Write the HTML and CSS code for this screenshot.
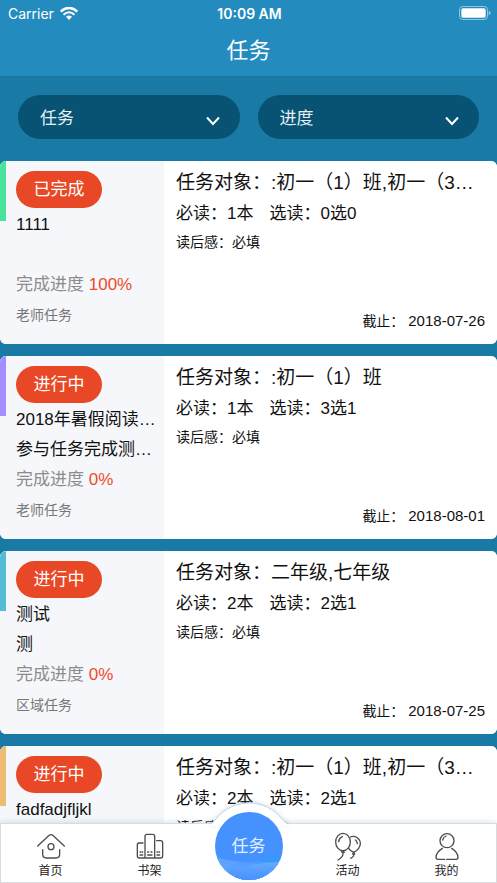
FILE: index.html
```html
<!DOCTYPE html>
<html lang="zh-CN">
<head>
<meta charset="utf-8">
<meta name="viewport" content="width=device-width, initial-scale=1">
<title>任务</title>
<link rel="stylesheet" href="styles.css">
</head>
<body>
<header class="header">
  <div class="status">
    <div class="status-carrier">
      <span>Carrier</span>
      <svg class="wifi" viewBox="0 0 51 37" aria-hidden="true">
        <path d="M2 13Q25.500-8 49 13" fill="none" stroke="#fff" stroke-width="7"/>
        <path d="M10 22Q25.500 8 41 22" fill="none" stroke="#fff" stroke-width="6"/>
        <path d="M17 28Q25.500 20 34 28L25.500 37Z" fill="#fff"/>
      </svg>
    </div>
    <span class="status-time">10:09 AM</span>
    <svg class="battery" viewBox="0 0 96 42" aria-hidden="true">
      <rect x="1.500" y="1.500" width="84" height="39" rx="10" fill="none" stroke="#fff" stroke-opacity=".5" stroke-width="3"/>
      <rect x="7" y="7" width="73" height="28" rx="5" fill="#fff"/>
      <path d="M89 14q6 2 6 7t-6 7z" fill="#fff" fill-opacity=".5"/>
    </svg>
  </div>
  <h1 class="title">任务</h1>
</header>

<main class="main">
  <form class="filters">
    <label class="filter">
      <select class="filter-select" aria-label="任务"><option>任务</option></select>
      <svg class="chevron" viewBox="0 0 14 10" aria-hidden="true"><path d="M1 1.500l6 6.500 6-6.500"/></svg>
    </label>
    <label class="filter">
      <select class="filter-select" aria-label="进度"><option>进度</option></select>
      <svg class="chevron" viewBox="0 0 14 10" aria-hidden="true"><path d="M1 1.500l6 6.500 6-6.500"/></svg>
    </label>
  </form>

  <section class="cards">
    <article class="card card-green">
      <div class="summary">
        <span class="badge">已完成</span>
        <p class="name">1111</p>
        <p class="name"></p>
        <p class="progress">完成进度 <span class="percent">100%</span></p>
        <p class="source">老师任务</p>
      </div>
      <div class="detail">
        <h2 class="target">任务对象：:初一（1）班,初一（3…</h2>
        <p class="books"><span>必读：1本</span><span>选读：0选0</span></p>
        <p class="review">读后感：必填</p>
        <p class="deadline">截止： <time class="date">2018-07-26</time></p>
      </div>
    </article>

    <article class="card card-purple">
      <div class="summary">
        <span class="badge">进行中</span>
        <p class="name">2018年暑假阅读…</p>
        <p class="name">参与任务完成测…</p>
        <p class="progress">完成进度 <span class="percent">0%</span></p>
        <p class="source">老师任务</p>
      </div>
      <div class="detail">
        <h2 class="target">任务对象：:初一（1）班</h2>
        <p class="books"><span>必读：1本</span><span>选读：3选1</span></p>
        <p class="review">读后感：必填</p>
        <p class="deadline">截止： <time class="date">2018-08-01</time></p>
      </div>
    </article>

    <article class="card card-cyan">
      <div class="summary">
        <span class="badge">进行中</span>
        <p class="name">测试</p>
        <p class="name">测</p>
        <p class="progress">完成进度 <span class="percent">0%</span></p>
        <p class="source">区域任务</p>
      </div>
      <div class="detail">
        <h2 class="target">任务对象：二年级,七年级</h2>
        <p class="books"><span>必读：2本</span><span>选读：2选1</span></p>
        <p class="review">读后感：必填</p>
        <p class="deadline">截止： <time class="date">2018-07-25</time></p>
      </div>
    </article>

    <article class="card card-amber">
      <div class="summary">
        <span class="badge">进行中</span>
        <p class="name">fadfadjfljkl</p>
      </div>
      <div class="detail">
        <h2 class="target">任务对象：:初一（1）班,初一（3…</h2>
        <p class="books"><span>必读：2本</span><span>选读：2选1</span></p>
        <p class="review">读后感：必填</p>
      </div>
    </article>
  </section>
</main>

<nav class="tabs">
  <a class="tab" href="#home">
    <svg class="tab-icon" viewBox="104 292 90 90" aria-hidden="true">
      <path d="M109 334L142 303Q149 297 156 303L189 334M124 345V359Q124 370 135 370H164Q175 370 175 359V345"/>
      <circle cx="149" cy="336" r="9"/>
    </svg>
    <span>首页</span>
  </a>
  <a class="tab" href="#shelf">
    <svg class="tab-icon" viewBox="403 292 90 90" aria-hidden="true">
      <path d="M433 370V305Q433 299 439 299H456Q462 299 462 305V370M427 325H415Q410 325 410 331V364Q410 370 416 370H480Q486 370 486 364V325Q486 318 480 318H468"/>
      <path d="M418 352H420M424 352H426M418 361H426M441 352H444M451 352H454M441 361H454M469 352H471M475 352H477M469 361H477"/>
    </svg>
    <span>书架</span>
  </a>
  <a class="tab tab-current" href="#task" aria-current="page">
    <svg class="bump" viewBox="0 0 84 24" aria-hidden="true">
      <path class="bump-fill" d="M2 24Q6 21 9 17A42 42 0 0 1 75 17Q78 21 82 24Z"/>
      <path class="bump-line" d="M2 21.500Q6 21 9 17A42 42 0 0 1 75 17Q78 21 82 21.500"/>
    </svg>
    <span class="disc">
      <svg class="waves" viewBox="0 0 68 68" aria-hidden="true">
        <defs>
          <linearGradient id="right-wave" x1="0" x2="1"><stop offset=".3" stop-color="#4592ff"/><stop offset="1" stop-color="#2b9cff"/></linearGradient>
          <linearGradient id="left-wave" x1="0" x2="1"><stop offset="0" stop-color="#63a5ff"/><stop offset="1" stop-color="#3f96ff"/></linearGradient>
          <linearGradient id="low-wave" x1="0" x2="0" y1="0" y2="1"><stop offset="0" stop-color="#66aaff"/><stop offset="1" stop-color="#4592ff"/></linearGradient>
        </defs>
        <path d="M20 51Q44 48 68 43V68H20Z" fill="url(#right-wave)"/>
        <path d="M0 45Q22 51 38 50T68 54V68H0Z" fill="url(#left-wave)"/>
        <path d="M0 57Q16 58 32 54T68 50V68H0Z" fill="url(#low-wave)"/>
      </svg>
      <span class="disc-label">任务</span>
    </span>
  </a>
  <a class="tab" href="#activity">
    <svg class="tab-icon" viewBox="16 292 90 90" aria-hidden="true">
      <ellipse cx="46" cy="322" rx="22" ry="26"/>
      <path d="M68 307C83 301 98 312 98 327Q97 343 78 353Q68 349 63 341M42 349L46 348 50 353H43ZM46 353Q48 366 31 376M78 353L81 358H75L78 353M78 358Q80 366 69 371M33 321Q34 310 44 306M89 327Q88 319 83 316"/>
    </svg>
    <span>活动</span>
  </a>
  <a class="tab" href="#me">
    <svg class="tab-icon" viewBox="314 292 90 90" aria-hidden="true">
      <circle cx="359" cy="318" r="21"/>
      <path d="M345 341Q326 353 326 368Q326 374 332 374H352M358 374H386Q392 374 392 368Q391 352 373 341M346 316Q348 307 356 304"/>
    </svg>
    <span>我的</span>
  </a>
</nav>
</body>
</html>
```
FILE: styles.css
```css
* { box-sizing: border-box; }

body {
  margin: 0;
  height: 100vh;
  display: flex;
  flex-direction: column;
  overflow: hidden;
  background: #197aa6;
  color: #111;
  font-family: "Liberation Sans", "Noto Sans CJK SC", sans-serif;
  font-size: 17px;
}

h1, h2, p { margin: 0; font-weight: 400; }

.header {
  flex: none;
  background: #248bbf;
  border-bottom: 1px solid #1b729d;
  color: #fff;
}

.status {
  display: grid;
  grid-template-columns: 1fr auto 1fr;
  align-items: center;
  height: 26px;
  padding: 0 6px 0 8px;
  font-family: Inter, sans-serif;
  font-size: 14px;
}
.status-carrier { display: flex; align-items: center; gap: 6px; }
.status-time { font-weight: 600; }
.wifi { width: 18px; height: 13px; }
.battery { width: 32px; height: 14px; justify-self: end; }

.title {
  height: 50px;
  line-height: 50px;
  font-size: 22px;
  text-align: center;
}

.main { flex: 1; min-height: 0; overflow: hidden; }

.filters {
  display: grid;
  grid-template-columns: 1fr 1fr;
  gap: 18px;
  padding: 18px 18px 22px;
}
.filter { position: relative; display: block; }
.filter-select {
  appearance: none;
  display: block;
  width: 100%;
  height: 44px;
  padding: 2px 22px 0;
  border: 0;
  border-radius: 22px;
  background: #085374;
  color: #e6f0f4;
  font: inherit;
}
.chevron {
  position: absolute;
  right: 20px;
  top: 21px;
  width: 14px;
  height: 10px;
  fill: none;
  stroke: #fff;
  stroke-width: 2;
  pointer-events: none;
}

.cards { display: grid; gap: 12px; }

.card {
  display: flex;
  min-height: 183px;
  border-radius: 6px;
  overflow: hidden;
  background: #fff;
}
.card::before {
  content: "";
  flex: none;
  width: 6px;
  height: 60px;
  background: var(--mark);
  box-shadow: 0 0 0 200px #f5f7fa;
}
.card-green { --mark: #48e39b; }
.card-purple { --mark: #a48fff; }
.card-cyan { --mark: #56bcd6; }
.card-amber { --mark: #ebbc72; }

.summary {
  position: relative;
  flex: none;
  width: 158px;
  padding: 10px 4px 0 10px;
  background: #f5f7fa;
}
.badge {
  display: block;
  width: 86px;
  height: 37px;
  margin-bottom: 2px;
  border-radius: 19px;
  background: #e94826;
  color: #fff;
  line-height: 38px;
  text-align: center;
}
.name, .progress, .source { height: 30px; line-height: 30px; white-space: nowrap; }
.progress { color: #8c8c8c; }
.percent { color: #f04a2b; }
.source { color: #777; font-size: 14px; }

.detail {
  position: relative;
  flex: 1;
  min-width: 0;
  display: flex;
  flex-direction: column;
  padding: 6px 12px 10px;
  background: #fff;
}
.target { font-size: 19px; line-height: 32px; white-space: nowrap; }
.books { display: flex; gap: 16px; line-height: 30px; }
.review, .deadline { font-size: 14px; line-height: 26px; }
.deadline { margin-top: auto; text-align: right; }
.date { font-size: 15px; }

.tabs {
  position: relative;
  flex: none;
  display: grid;
  grid-template-columns: repeat(5, 1fr);
  height: 60px;
  border: 1px solid #d9dcdf;
  background: #fff;
  box-shadow: 0 -1px 5px rgba(90, 150, 190, .25);
}
.tab {
  position: relative;
  display: flex;
  flex-direction: column;
  align-items: center;
  padding-top: 8px;
  color: #222;
  font-size: 12px;
  line-height: 18px;
  text-decoration: none;
}
.tab-icon {
  width: 30px;
  height: 30px;
  fill: none;
  stroke: #4d4d4d;
  stroke-width: 4;
  stroke-linecap: round;
  stroke-linejoin: round;
}
.bump {
  position: absolute;
  top: -22px;
  left: 50%;
  width: 84px;
  height: 24px;
  margin-left: -42px;
  overflow: visible;
  filter: drop-shadow(0 -1px 2px rgba(90, 150, 190, .25));
}
.bump-fill { fill: #fff; }
.bump-line { fill: none; stroke: #cbd2d8; }
.disc {
  position: absolute;
  top: -12px;
  left: 50%;
  width: 68px;
  height: 68px;
  margin-left: -34px;
  border-radius: 50%;
  overflow: hidden;
  background: #4592ff;
}
.waves { display: block; width: 68px; height: 68px; }
.disc-label {
  position: absolute;
  inset: 0;
  color: #e3efff;
  font-size: 17px;
  line-height: 70px;
  text-align: center;
}
```
